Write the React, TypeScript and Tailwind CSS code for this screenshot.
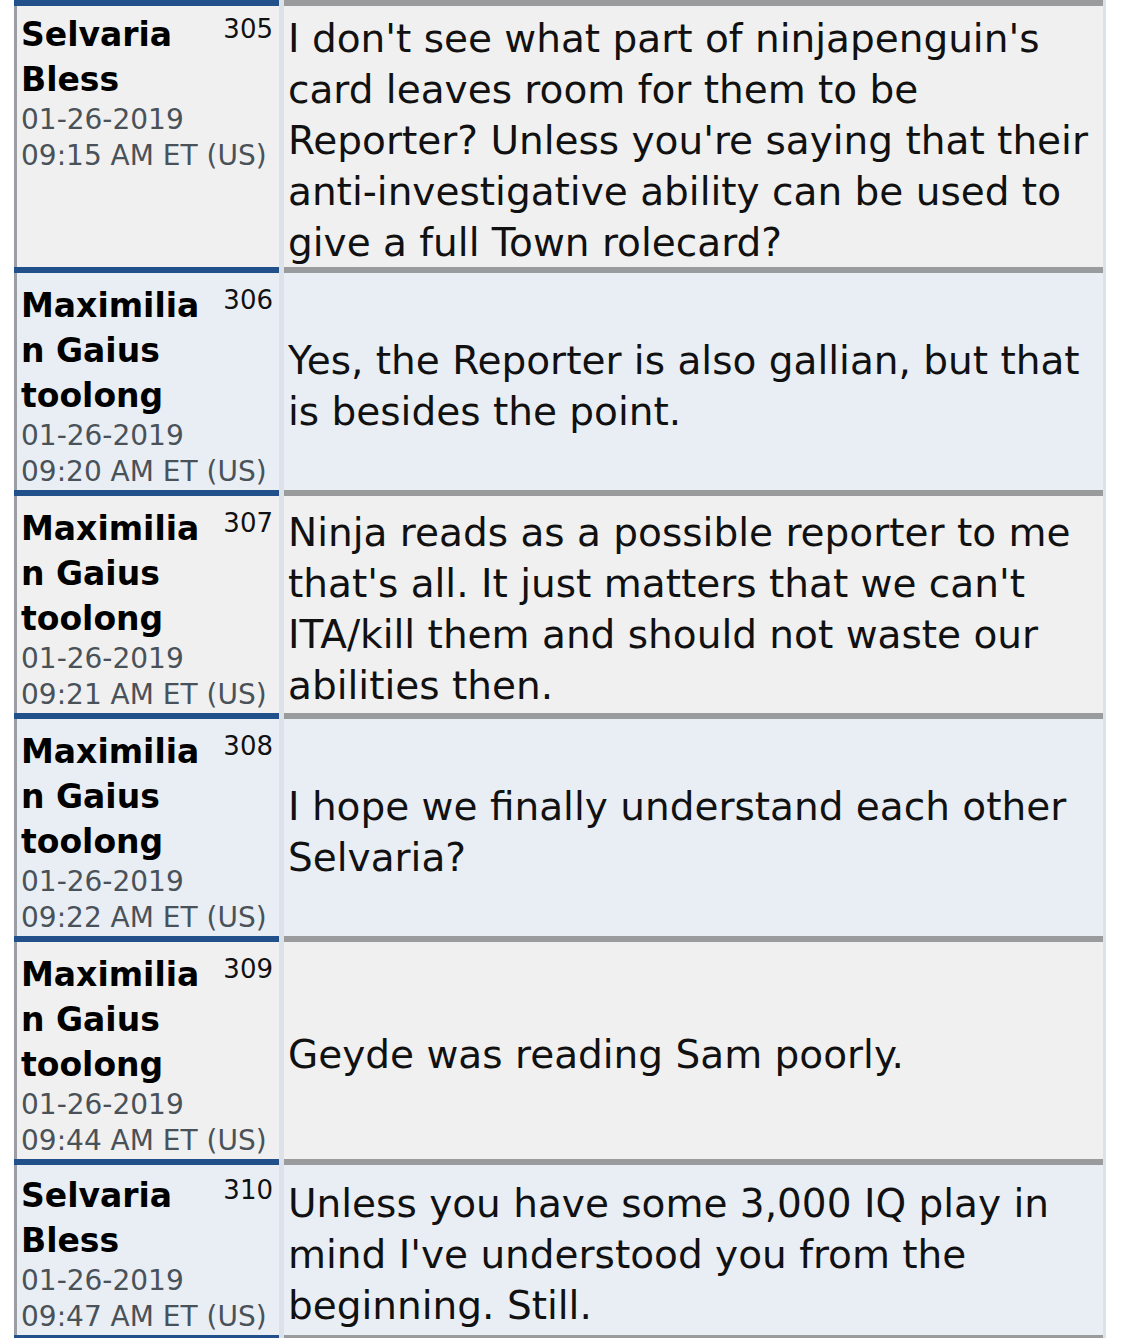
import React from 'react';

interface Post {
  id: number;
  author: string;
  date: string;
  time: string;
  body: string;
}

const posts: Post[] = [
  {
    id: 305,
    author: 'Selvaria Bless',
    date: '01-26-2019',
    time: '09:15 AM ET (US)',
    body: "I don't see what part of ninjapenguin's card leaves room for them to be Reporter? Unless you're saying that their anti-investigative ability can be used to give a full Town rolecard?",
  },
  {
    id: 306,
    author: 'Maximilian Gaius toolong',
    date: '01-26-2019',
    time: '09:20 AM ET (US)',
    body: 'Yes, the Reporter is also gallian, but that is besides the point.',
  },
  {
    id: 307,
    author: 'Maximilian Gaius toolong',
    date: '01-26-2019',
    time: '09:21 AM ET (US)',
    body: "Ninja reads as a possible reporter to me that's all. It just matters that we can't ITA/kill them and should not waste our abilities then.",
  },
  {
    id: 308,
    author: 'Maximilian Gaius toolong',
    date: '01-26-2019',
    time: '09:22 AM ET (US)',
    body: 'I hope we finally understand each other Selvaria?',
  },
  {
    id: 309,
    author: 'Maximilian Gaius toolong',
    date: '01-26-2019',
    time: '09:44 AM ET (US)',
    body: 'Geyde was reading Sam poorly.',
  },
  {
    id: 310,
    author: 'Selvaria Bless',
    date: '01-26-2019',
    time: '09:47 AM ET (US)',
    body: "Unless you have some 3,000 IQ play in mind I've understood you from the beginning. Still.",
  },
];

function PostRow({ post, index, last }: { post: Post; index: number; last: boolean }) {
  const bg = index % 2 === 0 ? 'bg-[#f0f0f0]' : 'bg-[#e9eef5]';
  // first row sits a little higher in the thread view, last one is a bit tighter
  const leftPad = index === 0 ? 'pt-[6px] pb-[4px]' : last ? 'pt-[8px] pb-0' : 'pt-[10px] pb-0';

  return (
    <div className="flex gap-[5px]">
      {/* Author column */}
      <div className={`w-[265px] shrink-0 flex flex-col ${bg}`}>
        <div className="h-[6px] bg-[#21508a]" />
        <div className={`flex-1 border-l-[3px] border-[#9b9ea2] pl-[4px] pr-[6px] ${leftPad}`}>
          <div className="flex justify-between items-start">
            <div className="w-[191px] break-words text-[33px] leading-[45px] font-bold text-black">
              {post.author}
            </div>
            <div className="text-[26px] leading-[34px] text-[#111]">{post.id}</div>
          </div>
          <div className="text-[28px] leading-[36px] text-[#4a5259]">
            <div>{post.date}</div>
            <div>{post.time}</div>
          </div>
        </div>
      </div>

      {/* Message column */}
      <div className={`w-[819px] shrink-0 flex flex-col ${bg}`}>
        <div className="h-[6px] bg-[#999b9d]" />
        <div className="flex-1 flex items-center pl-[4px] pr-[2px] py-[3px]">
          <p className="translate-y-[4px] text-[39px] leading-[51px] text-[#111]">{post.body}</p>
        </div>
      </div>
    </div>
  );
}

export default function App() {
  return (
    <div
      className="min-h-screen bg-white"
      style={{ fontFamily: '"DejaVu Sans", Verdana, sans-serif' }}
    >
      <div className="ml-[14px] w-[1092px] pr-[3px] bg-[#dde2ea] flex flex-col">
        {posts.map((post, i) => (
          <PostRow key={post.id} post={post} index={i} last={i === posts.length - 1} />
        ))}
        <div className="flex gap-[5px]">
          <div className="w-[265px] h-[6px] bg-[#21508a]" />
          <div className="w-[819px] h-[6px] bg-[#999b9d]" />
        </div>
      </div>
    </div>
  );
}
